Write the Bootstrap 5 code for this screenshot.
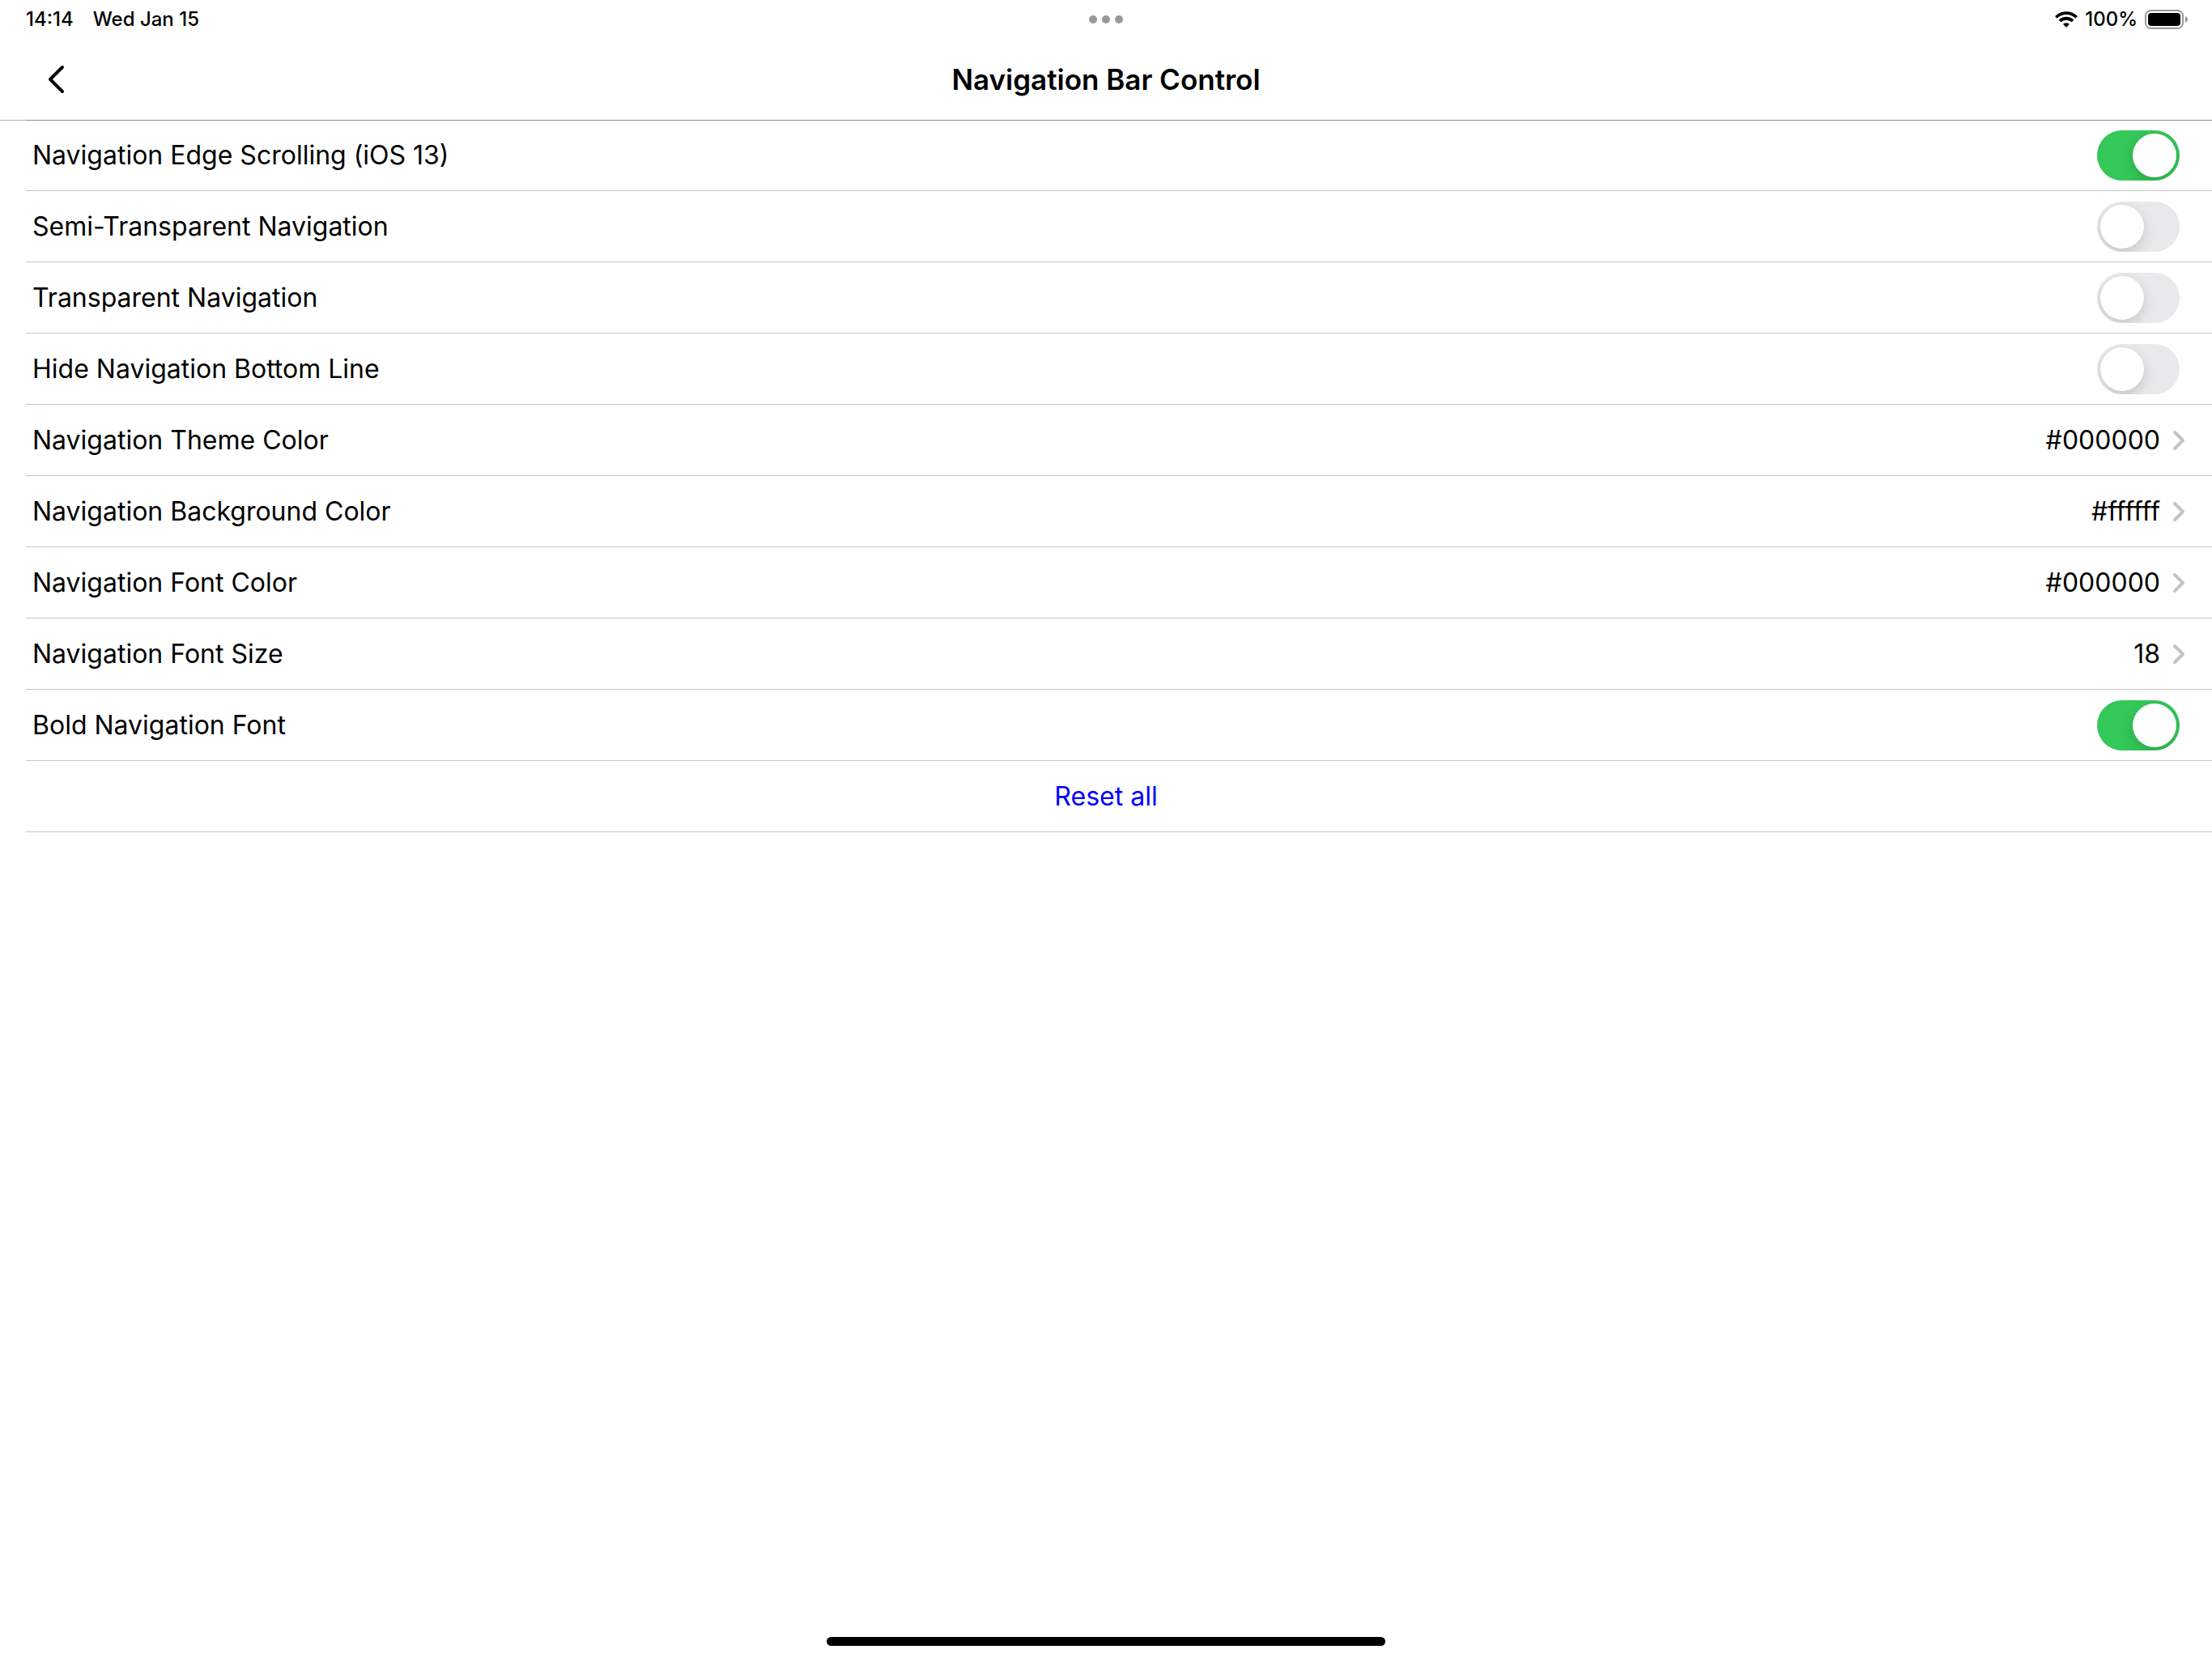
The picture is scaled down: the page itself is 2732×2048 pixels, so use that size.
<!DOCTYPE html>
<html lang="en">
<head>
<meta charset="utf-8">
<meta name="viewport" content="width=device-width, initial-scale=1">
<title>Navigation Bar Control</title>
<link href="https://cdn.jsdelivr.net/npm/bootstrap@5.3.0/dist/css/bootstrap.min.css" rel="stylesheet">
<style>
body { font-family: Inter, "Liberation Sans", sans-serif; font-size: 32px; line-height: 40px; color: #000; background: #fff; }
.status-bar { height: 48px; font-size: 24px; line-height: 48px; font-weight: 500; }
.status-side { flex: 1 1 0; padding: 0 30px 0 32px; }
.status-icons { gap: 9px; }
.dots { gap: 6px; }
.dots span { width: 10px; height: 10px; border-radius: 50%; background: #999; }
.nav-head { height: 101px; padding: 0 32px; border-bottom: 1px solid rgba(0,0,0,.3); }
.nav-head .side { width: 76px; }
.nav-head h1 { font-size: 35px; line-height: 44px; font-weight: 600; }
.back-btn { width: 76px; height: 76px; line-height: 0; }
.settings { margin: -1px 0 0 32px; }
.settings li { height: 88px; padding: 0 40px 0 8px; border-bottom: 1px solid #c6c6c8; }
.settings li:first-child { border-top: 1px solid rgba(60,60,67,.29); }
.settings li.link-row { padding-right: 34px; }
.settings a { color: #000; gap: 16px; }
.toggle { width: 102px; height: 62px; border-radius: 31px; appearance: none; background: #e9e9eb; overflow: hidden; padding: 4px; cursor: pointer; }
.toggle::before { content: ""; display: block; width: 54px; height: 54px; border-radius: 50%; background: #fff; box-shadow: 0 6px 16px rgba(0,0,0,.15), 0 0 2px rgba(0,0,0,.05); }
.toggle:checked { background: #34c759; }
.toggle:checked::before { margin-left: 40px; }
.reset { color: #00f; font-size: 32px; line-height: 40px; }
.home-bar { width: 690px; max-width: 60%; height: 11px; border-radius: 6px; background: #000; margin-bottom: 15px; }
</style>
<script src="https://cdn.jsdelivr.net/npm/bootstrap@5.3.0/dist/js/bootstrap.bundle.min.js"></script>
</head>
<body class="d-flex flex-column min-vh-100">
<div class="status-bar d-flex align-items-center">
  <div class="status-side d-flex"><span class="me-4">14:14</span><span>Wed Jan 15</span></div>
  <div class="dots d-flex"><span></span><span></span><span></span></div>
  <div class="status-side status-icons d-flex justify-content-end align-items-center">
    <svg width="28" height="20" viewBox="0 0 28 20" aria-label="Wi-Fi">
      <g fill="none" stroke="#000" stroke-width="3.8"><path d="M1.4 7.300a18 18 0 0 1 25.200 0"/><path d="M6 12a11.500 11.500 0 0 1 16 0"/></g>
      <path d="M14 20l-4-4.200a5.800 5.800 0 0 1 8 0z"/>
    </svg>
    <span>100%</span>
    <svg width="53" height="24" viewBox="0 0 53 24" aria-label="Battery">
      <rect x="1" y="1" width="46" height="22" rx="6.500" fill="none" stroke="#999" stroke-width="2"/>
      <rect x="4" y="4" width="40" height="16" rx="4"/>
      <path d="M50 8c4 1.600 4 6.400 0 8z" fill="#999"/>
    </svg>
  </div>
</div>
<header class="nav-head d-flex align-items-center justify-content-between">
  <button type="button" class="back-btn btn p-0 border-0" aria-label="Back">
    <svg width="24" height="36" viewBox="0 0 24 36" fill="none" stroke="#000" stroke-width="4" stroke-linecap="round" stroke-linejoin="round"><path d="M19 3L4 18l15 15"/></svg>
  </button>
  <h1 class="mb-0">Navigation Bar Control</h1>
  <div class="side"></div>
</header>
<main class="flex-grow-1">
<ul class="settings list-unstyled">
  <li class="d-flex align-items-center justify-content-between"><label for="edge">Navigation Edge Scrolling (iOS 13)</label><input class="toggle" type="checkbox" role="switch" id="edge" checked></li>
  <li class="d-flex align-items-center justify-content-between"><label for="semi">Semi-Transparent Navigation</label><input class="toggle" type="checkbox" role="switch" id="semi"></li>
  <li class="d-flex align-items-center justify-content-between"><label for="transparent">Transparent Navigation</label><input class="toggle" type="checkbox" role="switch" id="transparent"></li>
  <li class="d-flex align-items-center justify-content-between"><label for="hide">Hide Navigation Bottom Line</label><input class="toggle" type="checkbox" role="switch" id="hide"></li>
  <li class="link-row d-flex"><a href="#theme" class="d-flex flex-fill align-items-center text-decoration-none"><span class="me-auto">Navigation Theme Color</span><span>#000000</span><svg width="14" height="24" viewBox="0 0 14 24" fill="none" stroke="#c4c4c6" stroke-width="4" stroke-linecap="round" stroke-linejoin="round"><path d="M2 2l10 10L2 22"/></svg></a></li>
  <li class="link-row d-flex"><a href="#background" class="d-flex flex-fill align-items-center text-decoration-none"><span class="me-auto">Navigation Background Color</span><span>#ffffff</span><svg width="14" height="24" viewBox="0 0 14 24" fill="none" stroke="#c4c4c6" stroke-width="4" stroke-linecap="round" stroke-linejoin="round"><path d="M2 2l10 10L2 22"/></svg></a></li>
  <li class="link-row d-flex"><a href="#font-color" class="d-flex flex-fill align-items-center text-decoration-none"><span class="me-auto">Navigation Font Color</span><span>#000000</span><svg width="14" height="24" viewBox="0 0 14 24" fill="none" stroke="#c4c4c6" stroke-width="4" stroke-linecap="round" stroke-linejoin="round"><path d="M2 2l10 10L2 22"/></svg></a></li>
  <li class="link-row d-flex"><a href="#font-size" class="d-flex flex-fill align-items-center text-decoration-none"><span class="me-auto">Navigation Font Size</span><span>18</span><svg width="14" height="24" viewBox="0 0 14 24" fill="none" stroke="#c4c4c6" stroke-width="4" stroke-linecap="round" stroke-linejoin="round"><path d="M2 2l10 10L2 22"/></svg></a></li>
  <li class="d-flex align-items-center justify-content-between"><label for="bold">Bold Navigation Font</label><input class="toggle" type="checkbox" role="switch" id="bold" checked></li>
  <li class="d-flex align-items-center justify-content-center"><button type="button" class="reset btn p-0 border-0">Reset all</button></li>
</ul>
</main>
<div class="home-bar mx-auto"></div>
</body>
</html>
